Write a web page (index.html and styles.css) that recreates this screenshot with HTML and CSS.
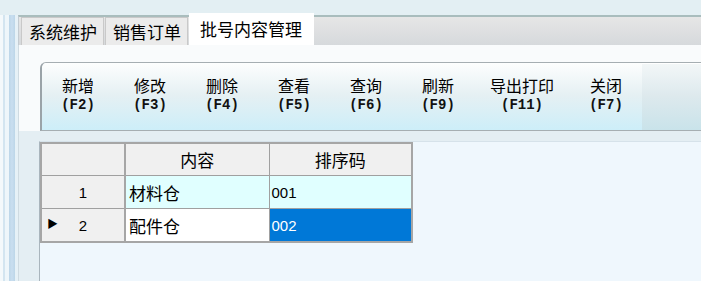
FILE: index.html
```html
<!DOCTYPE html>
<html lang="zh-CN">
<head>
  <meta charset="UTF-8">
  <meta name="viewport" content="width=device-width, initial-scale=1.0">
  <title>批号内容管理</title>
  <link rel="stylesheet" href="styles.css">
</head>
<body>

<div class="frame">
  <div class="rail"></div>
  <div class="main">
    <div class="tabbar">
      <div class="tab">系统维护</div>
      <div class="tab">销售订单</div>
      <div class="tab active">批号内容管理</div>
    </div>

    <div class="content">
      <div class="toolbar">
        <div class="tb-buttons">
          <div class="tb-btn"><span class="cap">新增</span><span class="key">(F2)</span></div>
          <div class="tb-btn"><span class="cap">修改</span><span class="key">(F3)</span></div>
          <div class="tb-btn"><span class="cap">删除</span><span class="key">(F4)</span></div>
          <div class="tb-btn"><span class="cap">查看</span><span class="key">(F5)</span></div>
          <div class="tb-btn"><span class="cap">查询</span><span class="key">(F6)</span></div>
          <div class="tb-btn"><span class="cap">刷新</span><span class="key">(F9)</span></div>
          <div class="tb-btn wide"><span class="cap">导出打印</span><span class="key">(F11)</span></div>
          <div class="tb-btn"><span class="cap">关闭</span><span class="key">(F7)</span></div>
        </div>
      </div>

      <div class="lower">
        <div class="gridpanel">
          <table class="grid">
            <colgroup>
              <col class="c-head">
              <col class="c-name">
              <col class="c-code">
            </colgroup>
            <thead>
              <tr>
                <th class="corner"></th>
                <th>内容</th>
                <th class="last">排序码</th>
              </tr>
            </thead>
            <tbody>
              <tr class="odd">
                <td class="rowhead">1</td>
                <td class="txt">材料仓</td>
                <td class="num">001</td>
              </tr>
              <tr class="current">
                <td class="rowhead"><span class="pointer">&#9654;</span>2</td>
                <td class="txt">配件仓</td>
                <td class="num selected">002</td>
              </tr>
            </tbody>
          </table>
        </div>
      </div>
    </div>
  </div>
</div>

</body>
</html>
```

FILE: styles.css
```css
html, body {
  margin: 0;
  height: 100%;
  overflow: hidden;
}

body {
  background: #e3eff3;
  padding-top: 15px;
  box-sizing: border-box;
  font-family: "Noto Sans CJK SC", "DejaVu Sans", sans-serif;
  color: #000;
}

.frame {
  display: flex;
  height: 266px;
}

/* left docking strip */
.rail {
  width: 18px;
  flex: none;
  background: linear-gradient(to right,
    #f4f9fb 0, #f4f9fb 3px,
    #d3e5f0 3px, #d3e5f0 5px,
    #eef6fa 5px, #eef6fa 9px,
    #bcd6e8 9px, #c9def0 12px, #bcd6e8 15px,
    #e6f1f7 15px, #e6f1f7 18px);
}

.main {
  flex: 1;
  display: flex;
  flex-direction: column;
}

/* tabs */
.tabbar {
  height: 28px;
  border-top: 2px solid #a9bdbd;
  background: linear-gradient(#e6e6e6, #d6d9dc);
  border-left: 1px solid #c4ccd2;
  display: flex;
  align-items: flex-end;
  padding-left: 2px;
}

.tab {
  height: 27px;
  line-height: 27px;
  padding: 0 6px 0 7px;
  font-size: 17px;
  background: #ebebeb;
  border: 1px solid #c9c9c9;
  border-bottom: none;
  margin-right: 1px;
}

.tab.active {
  height: 31px;
  line-height: 29px;
  margin-top: -2px;
  padding: 0 11px 0 10px;
  background: #fff;
  border-color: #fff;
}

.content {
  flex: 1;
  display: flex;
  flex-direction: column;
  background: #f9fbfc;
  border-left: 1px solid #cfdbe2;
}

/* tool bar */
.toolbar {
  height: 67px;
  margin: 17px 0 0 21px;
  border: 1px solid #a6aeb2;
  border-left: 2px solid #9aa3a8;
  border-right: none;
  border-top-left-radius: 6px;
  background: linear-gradient(#f3f7f8, #dde9ed 50%, #c9e3ea);
  box-shadow: inset 1px 1px 0 #ffffff;
  display: flex;
}

.tb-buttons {
  display: flex;
  width: 600px;
  background: linear-gradient(#fdfefe, #e5f0f3 48%, #cdeef9);
  border-top-left-radius: 5px;
}

.tb-btn {
  width: 72px;
  display: flex;
  flex-direction: column;
  align-items: center;
  justify-content: center;
  padding-bottom: 7px;
  box-sizing: border-box;
}

.tb-btn.wide {
  width: 96px;
}

.cap {
  display: block;
  font-size: 16px;
  line-height: 24px;
  height: 20px;
}

.key {
  display: block;
  font-family: "Liberation Mono", monospace;
  font-weight: bold;
  font-size: 14px;
  line-height: 16px;
  height: 16px;
  margin-top: 4px;
  color: #111;
}

.lower {
  flex: 1;
  padding: 10px 0 0 20px;
  background: #e4eef3;
  display: flex;
}

.gridpanel {
  flex: 1;
  background: #eff7fd;
  border-left: 1px solid #a9b5bd;
  border-top: 1px solid #d6e2ea;
}

/* data grid */
.grid {
  border-collapse: collapse;
  table-layout: fixed;
  width: 371px;
  border: 2px solid #a6a6a6;
  font-size: 17px;
}

.c-head { width: 84px; }
.c-name { width: 144px; }
.c-code { width: 143px; }

.grid th {
  height: 31px;
  padding: 0;
  font-weight: normal;
  background: #f0f0f0;
  border-bottom: 1px solid #a0a0a0;
  border-right: 1px solid #a0a0a0;
}

.grid th.last {
  border-right: none;
}

.grid th.corner {
  border-right: 2px solid #a6a6a6;
}

.grid td {
  height: 32px;
  padding: 0 0 0 3px;
  border-bottom: 1px solid #a0a0a0;
  border-right: 1px solid #a0a0a0;
  white-space: nowrap;
}

.grid tr:last-child td {
  border-bottom: none;
}

.grid td.rowhead {
  position: relative;
  background: #f0f0f0;
  text-align: center;
  padding: 0;
  font-family: "Liberation Sans", sans-serif;
  font-size: 15px;
  border-right: 2px solid #a6a6a6;
}

.grid tr.odd td {
  background: #e0ffff;
}

.grid tr.odd td.rowhead {
  background: #f0f0f0;
}

.grid tr.current td {
  background: #fff;
}

.grid tr.current td.rowhead {
  background: #f0f0f0;
}

.grid td.num {
  font-family: "Liberation Sans", sans-serif;
  font-size: 15px;
  padding-left: 2px;
  border-right: none;
}

.grid tr.current td.selected {
  background: #0078d7;
  color: #fff;
}

.pointer {
  position: absolute;
  left: 5px;
  top: 8px;
  font-size: 11px;
  line-height: 14px;
}
```
